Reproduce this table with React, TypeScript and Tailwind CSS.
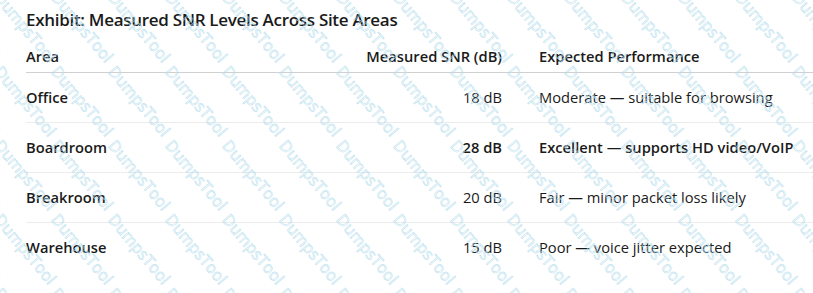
import React from "react";

const rows = [
  { area: "Office", snr: "18 dB", perf: "Moderate — suitable for browsing", strong: false },
  { area: "Boardroom", snr: "28 dB", perf: "Excellent — supports HD video/VoIP", strong: true },
  { area: "Breakroom", snr: "20 dB", perf: "Fair — minor packet loss likely", strong: false },
  { area: "Warehouse", snr: "15 dB", perf: "Poor — voice jitter expected", strong: false },
];

function Watermark() {
  const marks: { x: number; y: number }[] = [];
  for (let i = -2; i < 16; i++) {
    for (let j = -2; j < 5; j++) {
      marks.push({ x: 4 + 57 * i, y: -11 + 74 * j });
    }
  }
  return (
    <div className="pointer-events-none absolute inset-0 overflow-hidden">
      {marks.map((m, k) => (
        <span
          key={k}
          className="absolute origin-top-left rotate-[50deg] whitespace-nowrap font-['Open_Sans',sans-serif] text-[16px] leading-none text-transparent [-webkit-text-stroke:0.5px_#b3dded]"
          style={{ left: m.x, top: m.y }}
        >
          DumpsTool
        </span>
      ))}
    </div>
  );
}

export default function App() {
  return (
    <div className="relative h-[293px] w-[813px] overflow-hidden bg-white font-['Open_Sans','Noto_Sans',sans-serif] text-[#1a1a1a]">
      <div className="pl-[26px] pt-[8px]">
        <h2 className="text-[17px] font-semibold leading-[24px] tracking-[-0.3px]">
          Exhibit: Measured SNR Levels Across Site Areas
        </h2>
        <div>
          <div className="grid grid-cols-[320px_156px_1fr] border-b border-[#d0d0d0] pb-[6px] pt-[14px] text-[14.7px] font-semibold leading-[20px]">
            <div>Area</div>
            <div className="text-right">Measured SNR (dB)</div>
            <div className="pl-[37px]">Expected Performance</div>
          </div>
          {rows.map((r, i) => (
            <div
              key={r.area}
              className={
                "grid grid-cols-[320px_156px_1fr] py-[14px] text-[14.7px] leading-[21px] " +
                (i < rows.length - 1 ? "border-b border-[#ececec]" : "")
              }
            >
              <div className="font-semibold">{r.area}</div>
              <div className={r.strong ? "text-right font-semibold" : "text-right"}>{r.snr}</div>
              <div className={r.strong ? "pl-[37px] font-semibold" : "pl-[37px]"}>{r.perf}</div>
            </div>
          ))}
        </div>
      </div>
      <Watermark />
    </div>
  );
}
